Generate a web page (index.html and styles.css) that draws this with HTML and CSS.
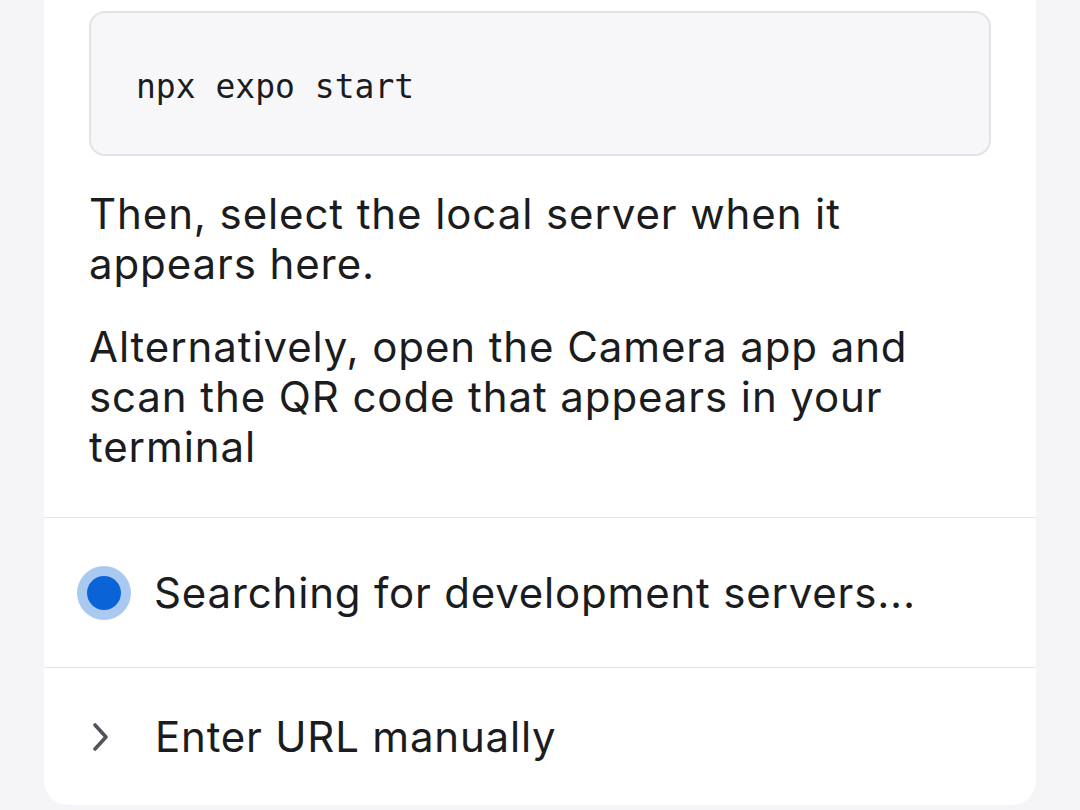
FILE: index.html
```html
<!DOCTYPE html>
<html>
<head>
<meta charset="utf-8">
<link rel="stylesheet" href="styles.css">
</head>
<body>
<div class="card">
  <div class="content">
    <div class="code"><span>npx expo start</span></div>
    <p class="text">Then, select the local server when it appears here.</p>
    <p class="text">Alternatively, open the Camera app and scan the QR code that appears in your terminal</p>
  </div>
  <div class="row row-search">
    <span class="dot"></span>
    <span class="label">Searching for development servers...</span>
  </div>
  <div class="row row-url">
    <span class="chev"><svg width="20" height="32" viewBox="0 0 20 32"><path d="M4 4 L15 16 L4 28" fill="none" stroke="#50535b" stroke-width="3.6" stroke-linecap="round" stroke-linejoin="round"/></svg></span>
    <span class="label">Enter URL manually</span>
  </div>
</div>
</body>
</html>
```
FILE: styles.css
```css
html, body {
  margin: 0;
  padding: 0;
  background: #f5f5f7;
}
body {
  width: 1080px;
  height: 810px;
  overflow: hidden;
  font-family: Inter, "Noto Sans", sans-serif;
  color: #1b1c20;
}
.card {
  margin: 0 44px;
  background: #ffffff;
  border-radius: 0 0 24px 24px;
  height: 805px;
  display: flex;
  flex-direction: column;
}
.content {
  padding: 11px 45px 45px 45px;
  border-bottom: 1px solid #e4e4e7;
}
.code {
  height: 136px;
  box-sizing: content-box;
  background: #f7f7f9;
  border: 2px solid #e3e3e7;
  border-radius: 16px;
  display: flex;
  align-items: center;
  padding: 5px 45px 0 45px;
  font-family: "DejaVu Sans Mono", monospace;
  font-size: 33px;
  color: #1b1c20;
}
.text {
  margin: 33px 0 0 0;
  font-size: 42px;
  letter-spacing: 0.9px;
  line-height: 50px;
}
.row {
  display: flex;
  align-items: center;
  padding: 0 45px;
  font-size: 42px;
  letter-spacing: 0.8px;
  line-height: 50px;
}
.row-search {
  height: 149px;
  border-bottom: 1px solid #e4e4e7;
}
.row-url {
  flex: 1;
}
.dot {
  width: 34px;
  height: 34px;
  border-radius: 50%;
  background: #0a64d8;
  box-shadow: 0 0 0 10px #a9c9f1;
  margin-left: -2px;
  margin-right: 33px;
  flex: none;
}
.chev {
  width: 64px;
  display: flex;
  align-items: center;
  padding-left: 2px;
  flex: none;
}
.chev svg {
  display: block;
}
```
